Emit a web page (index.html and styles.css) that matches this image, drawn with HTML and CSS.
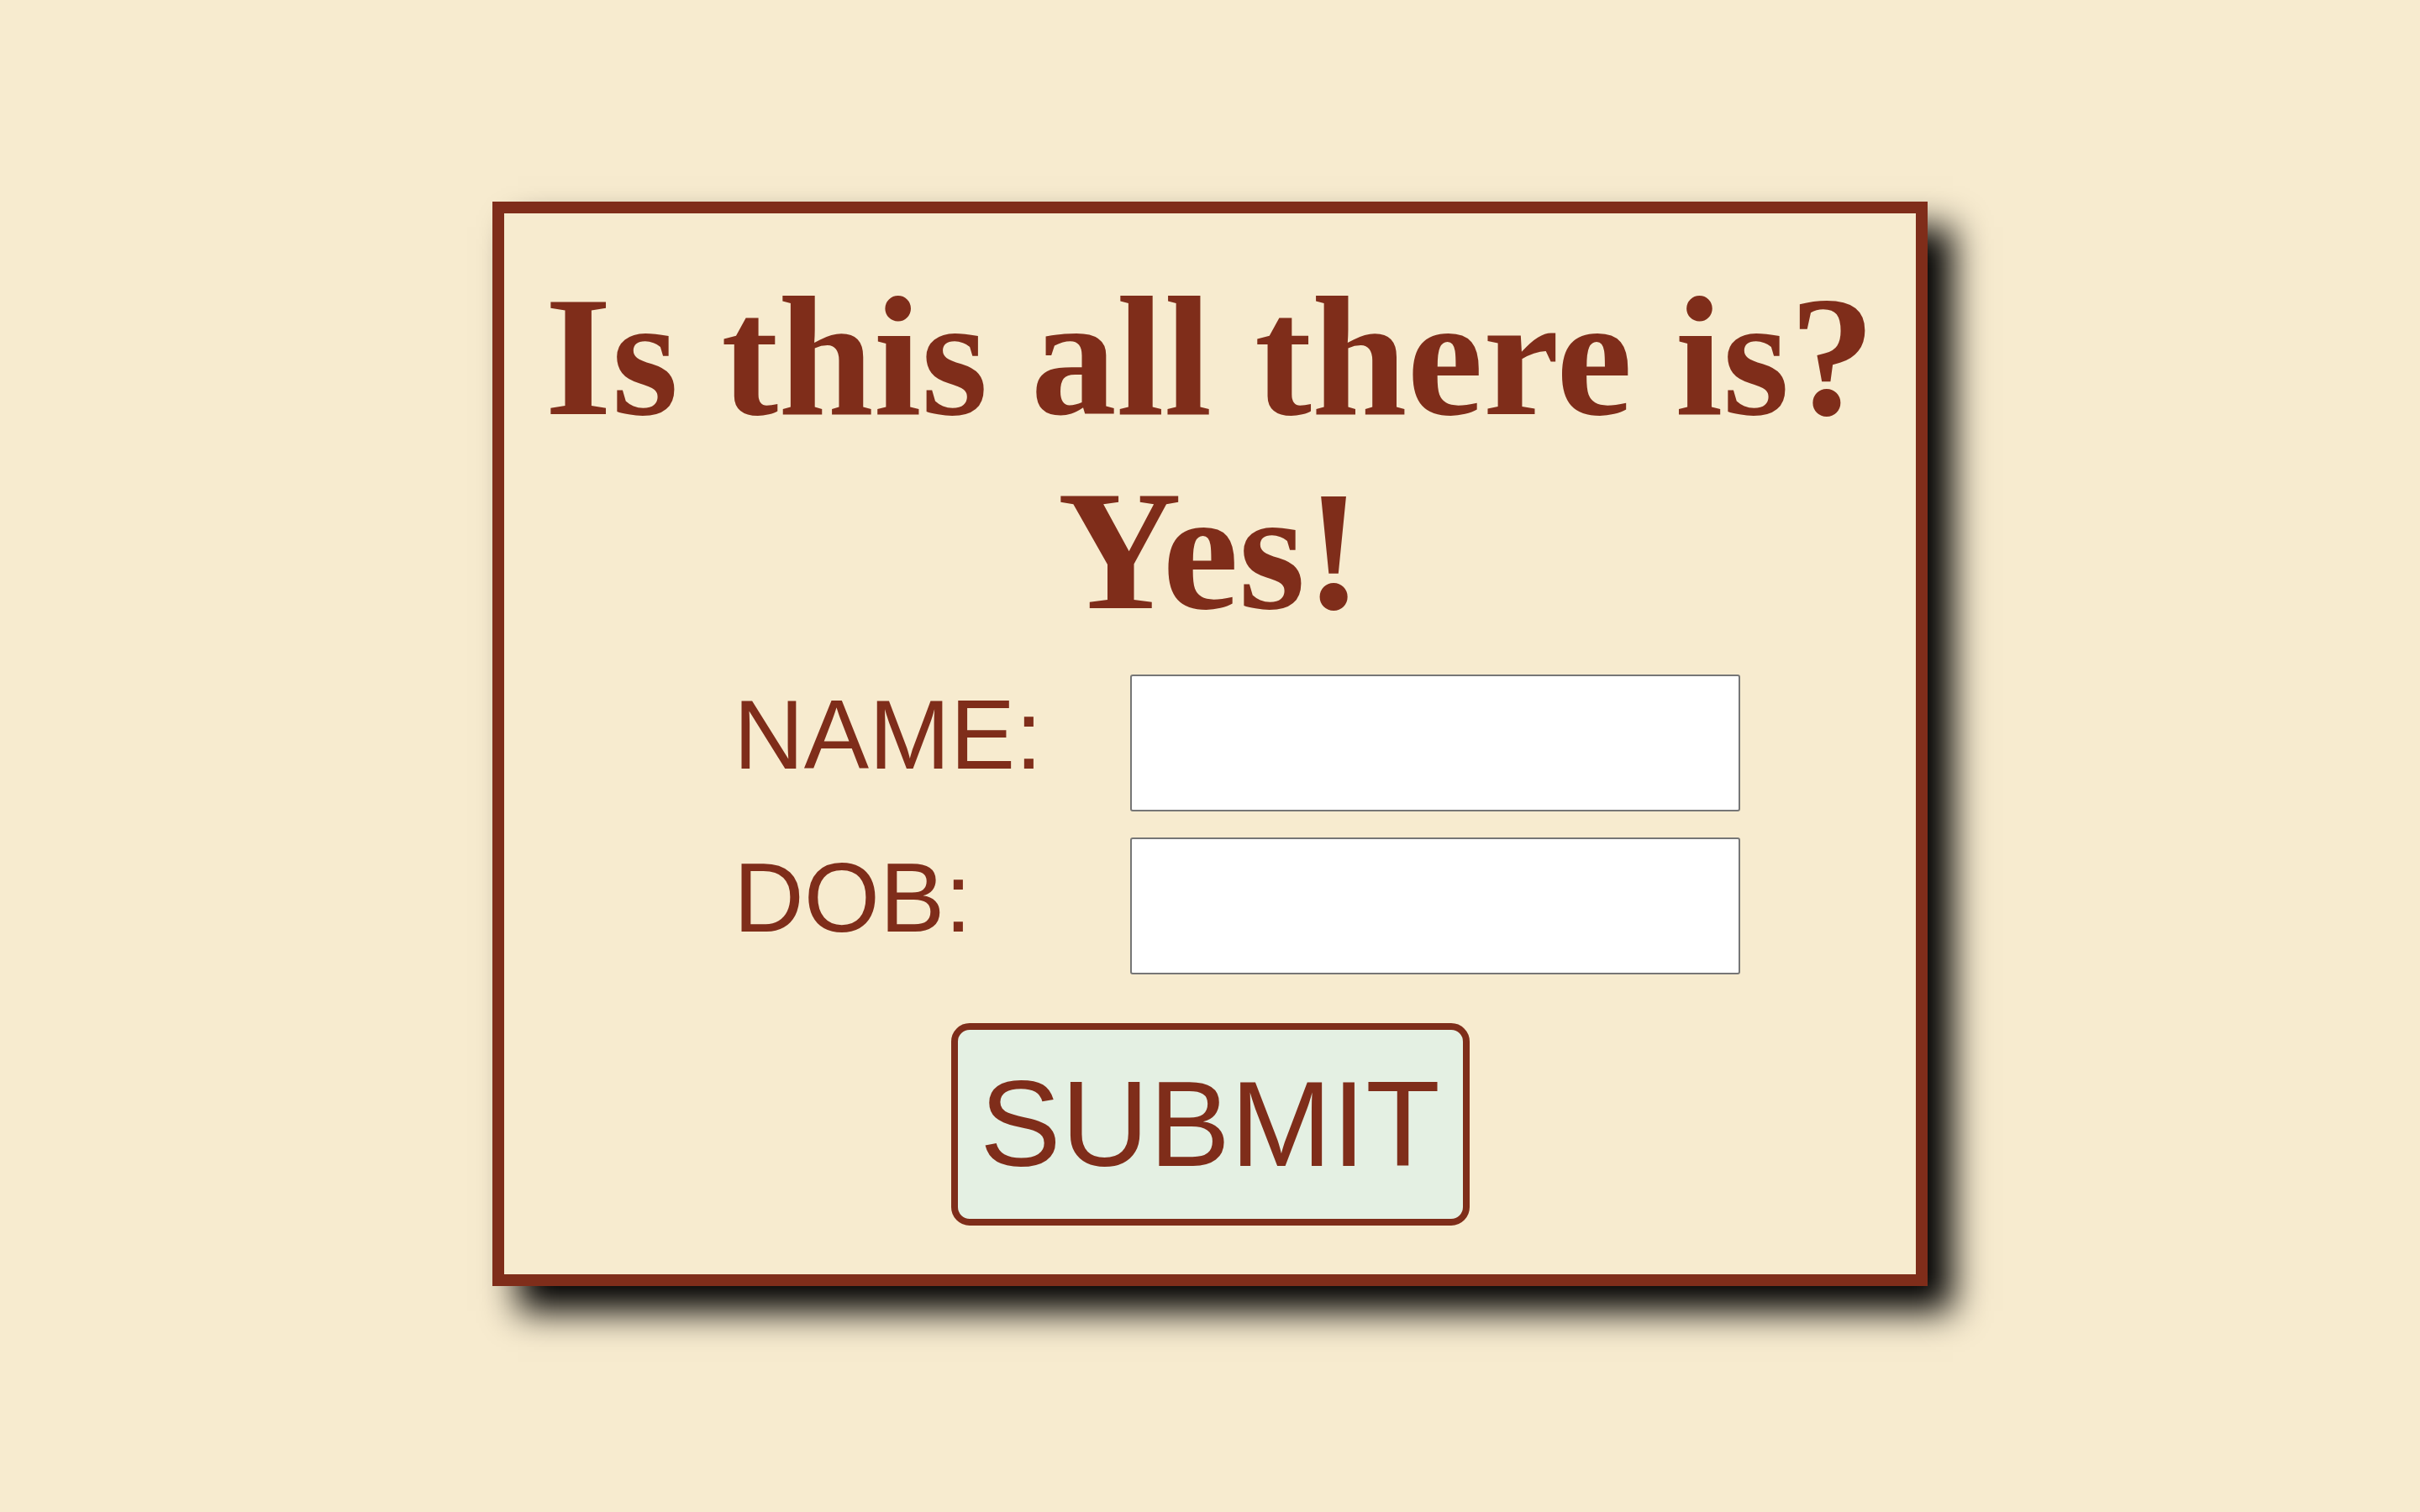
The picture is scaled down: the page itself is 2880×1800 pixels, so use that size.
FILE: index.html
```html
<!DOCTYPE html>
<html lang="en">
<head>
<meta charset="utf-8">
<title>Is this all there is?</title>
<link rel="stylesheet" href="styles.css">
</head>
<body>
  <main class="card">
    <h1 class="title">Is this all there is?<br>Yes!</h1>
    <form class="form">
      <div class="fields">
        <label class="label" for="name">NAME:</label>
        <input class="field" id="name" type="text">
        <label class="label" for="dob">DOB:</label>
        <input class="field" id="dob" type="text">
      </div>
      <button class="submit" type="button">SUBMIT</button>
    </form>
  </main>
</body>
</html>
```
FILE: styles.css
```css
html, body {
  margin: 0;
  padding: 0;
}
body {
  background: #f7ebcf;
  color: #7f2d1a;
  min-height: 1800px;
  padding-top: 240px;
  box-sizing: border-box;
}
.card {
  box-sizing: border-box;
  width: 1708px;
  margin: 0 auto;
  border: 14px solid #7f2d1a;
  background: #f7ebcf;
  box-shadow: 30px 30px 40px #000;
  padding: 55px 0 58px;
  display: flex;
  flex-direction: column;
  align-items: center;
}
.title {
  margin: 0;
  font-family: "Liberation Serif", "Times New Roman", serif;
  font-weight: bold;
  font-size: 204px;
  line-height: 231px;
  text-align: center;
}
.form {
  align-self: stretch;
  display: flex;
  flex-direction: column;
  align-items: center;
  margin-top: 32px;
}
.fields {
  display: grid;
  grid-template-columns: 472px 726px;
  row-gap: 31px;
  align-items: start;
  padding-left: 64px;
}
.label {
  font-family: "Liberation Sans", Arial, sans-serif;
  font-size: 116px;
  line-height: normal;
  padding-top: 5px;
}
.field {
  display: block;
  box-sizing: border-box;
  width: 726px;
  height: 163px;
  margin: 0;
  border: 2px solid #767676;
  border-radius: 3px;
  background: #fff;
  font-family: "Liberation Sans", Arial, sans-serif;
  font-size: 60px;
  padding: 0 12px;
}
.submit {
  box-sizing: border-box;
  width: 617px;
  height: 241px;
  margin-top: 58px;
  padding: 0;
  border: 8px solid #7f2d1a;
  border-radius: 22px;
  background: #e4f0e3;
  color: #7f2d1a;
  font-family: "Liberation Sans", Arial, sans-serif;
  font-size: 145px;
  line-height: normal;
  cursor: pointer;
}
```
